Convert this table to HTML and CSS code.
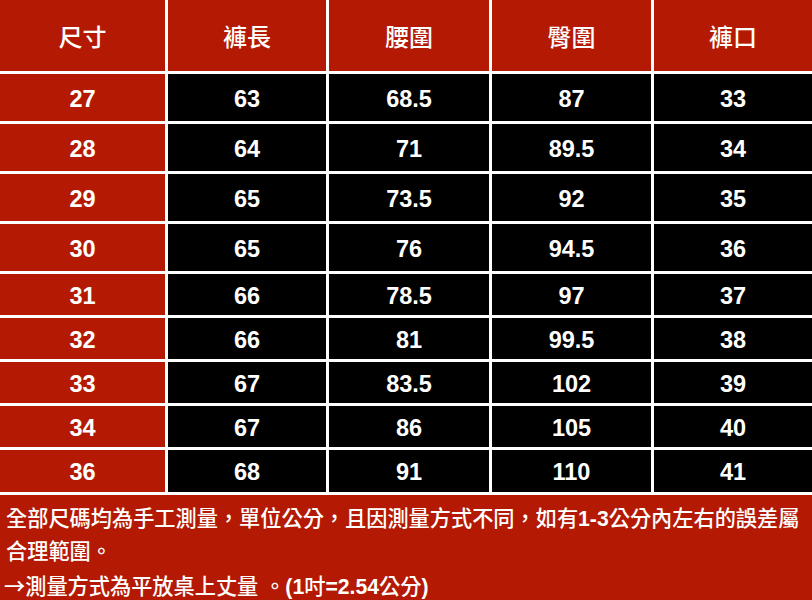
FILE: index.html
```html
<!DOCTYPE html>
<html lang="zh-Hant">
<head>
<meta charset="utf-8">
<link rel="stylesheet" href="styles.css">
</head>
<body>
<div class="page">
  <div class="table">
    <div class="cell head">尺寸</div>
    <div class="cell head">褲長</div>
    <div class="cell head">腰圍</div>
    <div class="cell head">臀圍</div>
    <div class="cell head">褲口</div>

    <div class="cell size">27</div><div class="cell val">63</div><div class="cell val">68.5</div><div class="cell val">87</div><div class="cell val">33</div>
    <div class="cell size">28</div><div class="cell val">64</div><div class="cell val">71</div><div class="cell val">89.5</div><div class="cell val">34</div>
    <div class="cell size">29</div><div class="cell val">65</div><div class="cell val">73.5</div><div class="cell val">92</div><div class="cell val">35</div>
    <div class="cell size">30</div><div class="cell val">65</div><div class="cell val">76</div><div class="cell val">94.5</div><div class="cell val">36</div>
    <div class="cell size">31</div><div class="cell val">66</div><div class="cell val">78.5</div><div class="cell val">97</div><div class="cell val">37</div>
    <div class="cell size">32</div><div class="cell val">66</div><div class="cell val">81</div><div class="cell val">99.5</div><div class="cell val">38</div>
    <div class="cell size">33</div><div class="cell val">67</div><div class="cell val">83.5</div><div class="cell val">102</div><div class="cell val">39</div>
    <div class="cell size">34</div><div class="cell val">67</div><div class="cell val">86</div><div class="cell val">105</div><div class="cell val">40</div>
    <div class="cell size">36</div><div class="cell val">68</div><div class="cell val">91</div><div class="cell val">110</div><div class="cell val">41</div>
  </div>
  <div class="note">
    <p>全部尺碼均為手工測量，單位公分，且因測量方式不同，如有<b>1-3</b>公分內左右的誤差屬合理範圍。</p>
    <p><span class="arrow">→</span>測量方式為平放桌上丈量 。<b>(1</b>吋<b>=2.54</b>公分<b>)</b></p>
  </div>
</div>
</body>
</html>
```

FILE: styles.css
```css
html, body {
  margin: 0;
  padding: 0;
  background: #ffffff;
}

.page {
  width: 812px;
  height: 600px;
  display: flex;
  flex-direction: column;
  overflow: hidden;
}

.table {
  display: grid;
  grid-template-columns: 165px 158px 160px 159px 158px;
  grid-template-rows: 71px repeat(4, 47px) repeat(4, 41px) 42px;
  gap: 3px;
  background: #ffffff;
  padding-bottom: 3px;
}

.cell {
  display: flex;
  align-items: center;
  justify-content: center;
  color: #ffffff;
  font-family: "Liberation Sans", Arial, "Noto Sans CJK TC", sans-serif;
  font-weight: 700;
  font-size: 23.5px;
  padding-top: 3px;
}

.head {
  background: #b41a03;
  font-family: "Noto Sans CJK TC", sans-serif;
  font-weight: 500;
  font-size: 24px;
  padding-top: 0;
  padding-bottom: 1px;
}

.size {
  background: #b41a03;
}

.val {
  background: #000000;
}

.note {
  flex: 1;
  background: #b41a03;
  color: #ffffff;
  padding: 7px 5px 0 6px;
  font-family: "Liberation Sans", Arial, "Noto Sans CJK SC", sans-serif;
  font-weight: 500;
  font-size: 21.2px;
  line-height: 33px;
}

.note p {
  margin: 0;
}

.note b {
  font-weight: 700;
}

.arrow {
  font-family: "Noto Sans CJK SC", sans-serif;
  margin-left: -2px;
}
```
